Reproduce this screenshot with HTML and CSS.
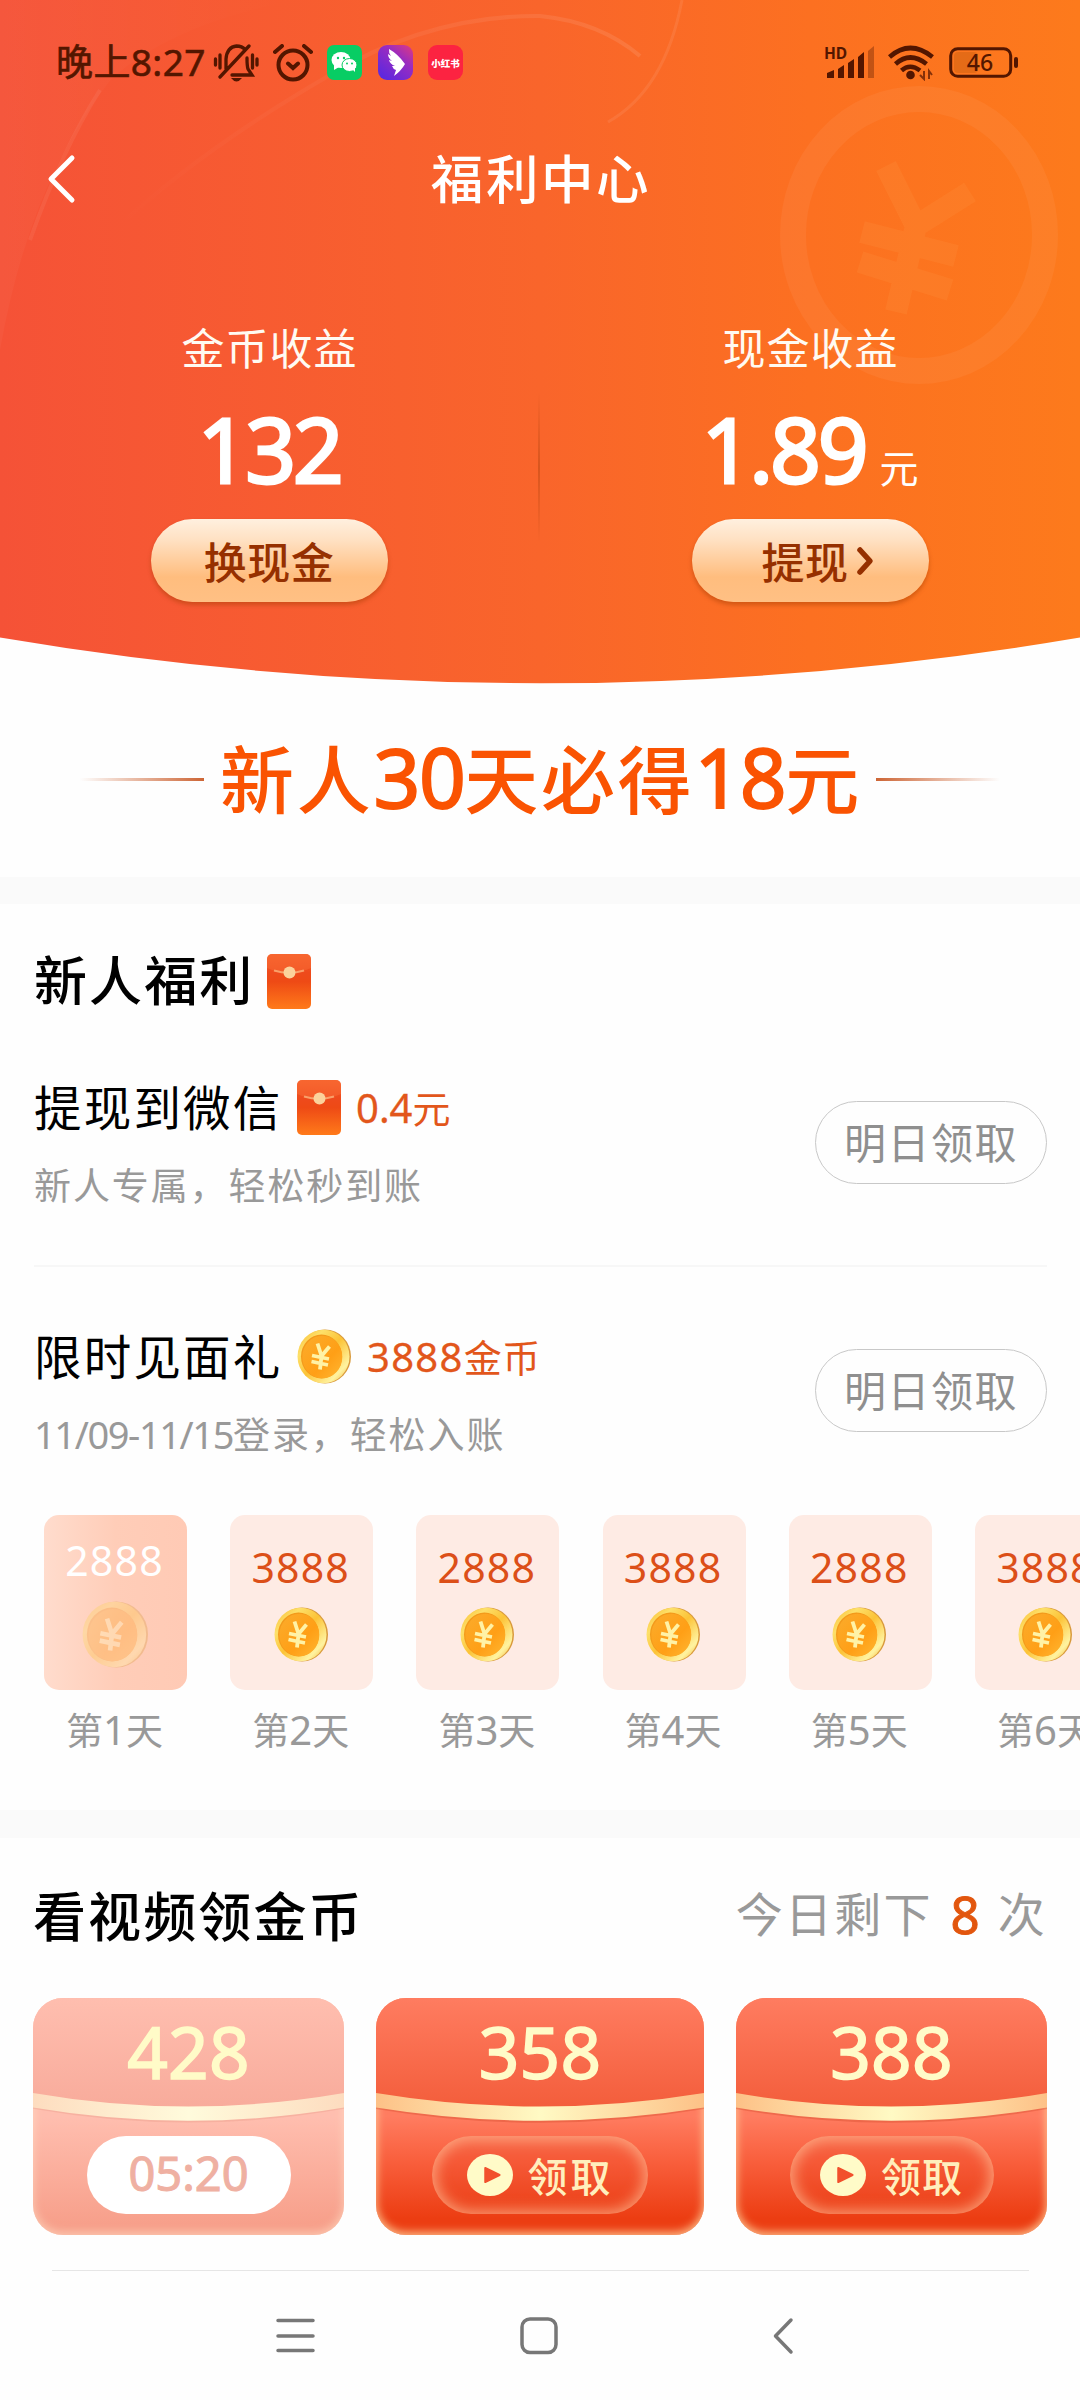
FILE: index.html
```html
<!DOCTYPE html>
<html lang="zh-CN">
<head>
<meta charset="utf-8">
<title>福利中心</title>
<link rel="stylesheet" href="styles.css">
</head>
<body>
<svg class="defs" aria-hidden="true">
  <defs>
    <linearGradient id="coinRim" x1="0" y1="0" x2="1" y2="1">
      <stop offset="0" stop-color="#fbb829"/><stop offset=".25" stop-color="#fde06a"/><stop offset=".5" stop-color="#fcc337"/><stop offset=".8" stop-color="#fff3a0"/><stop offset="1" stop-color="#f4a91f"/>
    </linearGradient>
    <linearGradient id="coinFace" x1="0" y1="0" x2="1" y2="1">
      <stop offset="0" stop-color="#fbac2c"/><stop offset=".6" stop-color="#ff9f16"/><stop offset="1" stop-color="#ffb732"/>
    </linearGradient>
    <linearGradient id="envelopeBody" x1="0" y1="0" x2="0" y2="1">
      <stop offset="0" stop-color="#f7622a"/><stop offset=".33" stop-color="#ee4a1c"/><stop offset=".5" stop-color="#ee4a15"/><stop offset="1" stop-color="#ff7a1a"/>
    </linearGradient>
    <linearGradient id="ribbon" x1="0" y1="0" x2="1" y2="0">
      <stop offset="0" stop-color="#fdc187"/><stop offset=".5" stop-color="#fffac4"/><stop offset="1" stop-color="#fdc187"/>
    </linearGradient>
    <linearGradient id="ribbonPale" x1="0" y1="0" x2="1" y2="0">
      <stop offset="0" stop-color="#fddcbf"/><stop offset=".5" stop-color="#fffbdc"/><stop offset="1" stop-color="#fddcbf"/>
    </linearGradient>
    <linearGradient id="flap" x1="0" y1="0" x2="0" y2="1">
      <stop offset="0" stop-color="#ff7c60"/><stop offset="1" stop-color="#f35d3b"/>
    </linearGradient>
    <linearGradient id="flapPale" x1="0" y1="0" x2="0" y2="1">
      <stop offset="0" stop-color="#ffbeaf"/><stop offset="1" stop-color="#f8ab9b"/>
    </linearGradient>
  </defs>
  <symbol id="coin" viewBox="0 0 54 54">
    <ellipse cx="28" cy="27" rx="26" ry="27" fill="#d99a3c"/>
    <ellipse cx="26.500" cy="27" rx="26" ry="26.700" fill="url(#coinRim)"/>
    <ellipse cx="24.500" cy="27" rx="20.500" ry="22" fill="#f39a1b"/>
    <ellipse cx="25.300" cy="27.500" rx="20" ry="21.300" fill="url(#coinFace)"/>
    <g fill="none" stroke="#fff2a6" stroke-width="3.800"><path d="M20.500 14l4 12.500M32.500 17l-8 9.500l-1.500 13.500M15 26l17 3.500M14.500 32l16.500 3.500"/></g>
  </symbol>
  <symbol id="envelope" viewBox="0 0 44 55">
    <rect width="44" height="55" rx="5" fill="url(#envelopeBody)"/>
    <path d="M0 14Q22 24 44 14V5a5 5 0 0 0-5-5H5a5 5 0 0 0-5 5z" fill="#f86a35" opacity=".55"/>
    <path d="M7 16.500Q22 21 37 16.500" fill="none" stroke="#f9a06a" stroke-width="2"/>
    <circle cx="22.500" cy="18.500" r="6" fill="#fbd29c"/>
  </symbol>
</svg>

<header class="hero">
  <svg class="hero-bg" viewBox="0 0 1080 684" preserveAspectRatio="none">
    <defs>
      <linearGradient id="heroFill"><stop offset="0" stop-color="#f55237"/><stop offset=".5" stop-color="#f9652b"/><stop offset=".75" stop-color="#fc7021"/><stop offset="1" stop-color="#fd7a1c"/></linearGradient>
      <linearGradient id="sheen"><stop offset="0" stop-color="#fff" stop-opacity="0"/><stop offset="1" stop-color="#fff" stop-opacity=".1"/></linearGradient>
      <linearGradient id="fold"><stop offset="0" stop-color="#fff" stop-opacity=".03"/><stop offset="1" stop-color="#fff" stop-opacity="0"/></linearGradient>
    </defs>
    <path d="M0 0H1080V637.500Q540 729 0 637.500z" fill="url(#heroFill)"/>
    <path d="M0 350Q30 180 112 78Q180 20 300 0H0z" fill="url(#fold)"/>
    <path d="M30 240Q62 150 100 90" fill="none" stroke="#fff" stroke-opacity=".06" stroke-width="4"/>
    <path d="M112 232Q200 150 330 75Q430 15 540 16Q600 22 640 56" fill="none" stroke="url(#sheen)" stroke-width="4"/>
    <path d="M682 0Q665 90 608 122" fill="none" stroke="#fff" stroke-opacity=".08" stroke-width="3"/>
    <ellipse cx="919" cy="235" rx="126" ry="136" fill="none" stroke="#fff" stroke-opacity=".05" stroke-width="26"/>
    <path d="M886 166L916 226L970 192M916 226L896 312M862 232L956 256M860 262L950 290" fill="none" stroke="#ff9a46" stroke-opacity=".18" stroke-width="22"/>
  </svg>

  <div class="status">
    <span class="clock">晚上8:27</span>
    <svg class="i-bell" viewBox="0 0 46 40" fill="none" stroke="#531600" stroke-width="3.300" stroke-linecap="round">
      <path d="M13 26V16Q14 4 23.500 3Q29 3 32 6.500M34 15q0 8 1 11l4 6H19M7 34L36 3M7 12v13M2.500 16v6M39.500 12v13M44 16v6"/><path d="M18 35h11q-5.500 7-11 0z" fill="#531600" stroke="none"/>
    </svg>
    <svg class="i-alarm" viewBox="0 0 40 38" fill="none" stroke="#531600" stroke-width="4" stroke-linecap="round">
      <circle cx="20" cy="21" r="14.500"/><path d="M2 8l7-6M38 8l-7-6M15 19.500l5 4.500l5-4.500"/>
    </svg>
    <svg class="i-app wechat" viewBox="0 0 35 35">
      <rect width="35" height="35" rx="7" fill="#08cd64"/><g fill="#fff"><ellipse cx="14" cy="15" rx="9.500" ry="8"/><path d="M7 20l0 5l5-3z"/></g><g fill="#fff" stroke="#08cd64"><ellipse cx="22.500" cy="20" rx="7.500" ry="6.500"/></g><path d="M25 24l3 3l0-5z" fill="#fff"/><g fill="#08cd64"><circle cx="11" cy="13" r="1.200"/><circle cx="17" cy="13" r="1.200"/><circle cx="20" cy="18.500" r="1"/><circle cx="25" cy="18.500" r="1"/></g>
    </svg>
    <svg class="i-app wing" viewBox="0 0 35 35">
      <defs><linearGradient id="wingFill" x1="1" y1="0" x2=".2" y2="1"><stop offset="0" stop-color="#e23a7e"/><stop offset=".4" stop-color="#9a2cc0"/><stop offset="1" stop-color="#5b28e0"/></linearGradient></defs>
      <rect width="35" height="35" rx="9" fill="url(#wingFill)"/><path d="M11 4Q20 9 27 19Q23 26 16 31L18 25Q15 24 14 21L17 21Q12 19 11 15L14 16Q10 13 10 9L13 11Q10.500 8 11 4z" fill="#fff"/>
    </svg>
    <svg class="i-app red" viewBox="0 0 35 35"><rect width="35" height="35" rx="9" fill="#fc2341"/><text x="17.500" y="21.500" text-anchor="middle" class="red-label">小红书</text></svg>
    <span class="spacer"></span>
    <svg class="i-signal" viewBox="0 0 52 34"><text x="0" y="12.500" class="hd-label">HD</text><g fill="#531600"><path d="M3 32v-5l7-3v8zM14 32v-9l6-4v13zM24 32V17l6-4v19zM34 32V11l6-5v26z"/><path d="M44 32V5l6-5v32z" opacity=".35"/></g></svg>
    <svg class="i-wifi" viewBox="0 0 46 36" fill="none" stroke="#531600" stroke-width="4.600"><path d="M1.500 12Q22 -6 44.500 12M7.500 19Q22 6 38.500 19M13.500 25.500Q22 18 32 25.500"/><circle cx="22.500" cy="30" r="4.300" fill="#531600" stroke="none"/><path d="M36 26v8l-4-4M41 34v-8l3 4" stroke-width="2" opacity=".7"/></svg>
    <svg class="i-battery" viewBox="0 0 70 32"><rect x="1.700" y="1.700" width="60" height="27.600" rx="7" fill="none" stroke="#531600" stroke-width="3"/><rect x="5" y="5" width="24" height="21" rx="4" fill="#c8600f" opacity=".45"/><rect x="65" y="10" width="4" height="11" rx="2" fill="#531600"/><text x="31" y="23.500" text-anchor="middle" class="battery-label">46</text></svg>
  </div>

  <div class="titlebar">
    <svg class="i-back" viewBox="0 0 30 50" fill="none" stroke="#fff" stroke-width="5" stroke-linecap="round" stroke-linejoin="round"><path d="M26 4L5 25L26 46"/></svg>
    <h1>福利中心</h1>
  </div>

  <div class="earnings">
    <div class="earning">
      <div class="e-label">金币收益</div>
      <div class="e-value">132</div>
      <button class="e-btn">换现金</button>
    </div>
    <div class="earning">
      <div class="e-label">现金收益</div>
      <div class="e-value">1.89<small>元</small></div>
      <button class="e-btn arrow">提现<svg viewBox="0 0 18 30" fill="none" stroke="#963000" stroke-width="5.500" stroke-linecap="round" stroke-linejoin="round"><path d="M4 4L14 15L4 26"/></svg></button>
    </div>
  </div>
</header>

<section class="banner"><i class="rule left"></i><h2>新人<b>30</b>天必得<b>18</b>元</h2><i class="rule right"></i></section>

<section class="newbie">
  <h3>新人福利<svg class="envelope"><use href="#envelope"/></svg></h3>
  <div class="task first">
    <div>
      <div class="t-title"><span>提现到微信</span><svg class="envelope"><use href="#envelope"/></svg><em><b>0.4</b>元</em></div>
      <div class="t-sub">新人专属，轻松秒到账</div>
    </div>
    <button class="later">明日领取</button>
  </div>
  <div class="task second">
    <div>
      <div class="t-title"><span>限时见面礼</span><svg class="coin"><use href="#coin"/></svg><em class="wide"><b>3888</b>金币</em></div>
      <div class="t-sub"><b>11/09-11/15</b>登录，轻松入账</div>
    </div>
    <button class="later">明日领取</button>
  </div>
  <div class="days">
    <div class="day done"><div class="d-card">2888<svg class="coin"><use href="#coin"/></svg></div><p>第<b>1</b>天</p></div>
    <div class="day"><div class="d-card">3888<svg class="coin"><use href="#coin"/></svg></div><p>第<b>2</b>天</p></div>
    <div class="day"><div class="d-card">2888<svg class="coin"><use href="#coin"/></svg></div><p>第<b>3</b>天</p></div>
    <div class="day"><div class="d-card">3888<svg class="coin"><use href="#coin"/></svg></div><p>第<b>4</b>天</p></div>
    <div class="day"><div class="d-card">2888<svg class="coin"><use href="#coin"/></svg></div><p>第<b>5</b>天</p></div>
    <div class="day"><div class="d-card">3888<svg class="coin"><use href="#coin"/></svg></div><p>第<b>6</b>天</p></div>
  </div>
</section>

<section class="videos">
  <div class="v-head"><h3>看视频领金币</h3><div class="remain">今日剩下<b>8</b>次</div></div>
  <div class="packets">
    <div class="packet claimed">
      <svg class="flap" viewBox="0 0 311 126" preserveAspectRatio="none"><path d="M0 0H311V97Q155 124 0 97z" fill="url(#flapPale)"/><path d="M0 109.500Q155 137 311 109.500" fill="none" stroke="#e08a78" stroke-opacity=".25" stroke-width="2.500"/><path d="M0 95Q155 122 311 95V109.500Q155 136 0 109.500z" fill="url(#ribbonPale)"/></svg>
      <div class="amount">428</div><div class="timer">05:20</div>
    </div>
    <div class="packet">
      <svg class="flap" viewBox="0 0 311 126" preserveAspectRatio="none"><path d="M0 0H311V97Q155 124 0 97z" fill="url(#flap)"/><path d="M0 109.500Q155 137 311 109.500" fill="none" stroke="#c43a18" stroke-opacity=".28" stroke-width="3"/><path d="M0 95Q155 122 311 95V109.500Q155 136 0 109.500z" fill="url(#ribbon)"/></svg>
      <div class="amount">358</div>
      <div class="claim"><svg viewBox="0 0 48 42" preserveAspectRatio="none"><ellipse cx="24" cy="21" rx="24" ry="21" fill="#fffbc8"/><path d="M19 14L34 21L19 28z" fill="#f2502c" stroke="#f2502c" stroke-width="2" stroke-linejoin="round"/></svg>领取</div>
    </div>
    <div class="packet">
      <svg class="flap" viewBox="0 0 311 126" preserveAspectRatio="none"><path d="M0 0H311V97Q155 124 0 97z" fill="url(#flap)"/><path d="M0 109.500Q155 137 311 109.500" fill="none" stroke="#c43a18" stroke-opacity=".28" stroke-width="3"/><path d="M0 95Q155 122 311 95V109.500Q155 136 0 109.500z" fill="url(#ribbon)"/></svg>
      <div class="amount">388</div>
      <div class="claim"><svg viewBox="0 0 48 42" preserveAspectRatio="none"><ellipse cx="24" cy="21" rx="24" ry="21" fill="#fffbc8"/><path d="M19 14L34 21L19 28z" fill="#f2502c" stroke="#f2502c" stroke-width="2" stroke-linejoin="round"/></svg>领取</div>
    </div>
  </div>
  <hr>
</section>

<nav class="sysnav">
  <svg viewBox="0 0 44 44"><path d="M5 6.500H40M5 22H40M5 36.500H40"/></svg>
  <svg viewBox="0 0 44 44"><rect x="5" y="5" width="34" height="33.500" rx="8"/></svg>
  <svg viewBox="0 0 44 44"><path d="M30 6L14.500 22L30 38"/></svg>
</nav>
</body>
</html>
```
FILE: styles.css
```css
* { box-sizing: border-box; margin: 0; padding: 0; }
body {
  width: 1080px; height: 2400px; overflow: hidden; background: #fefefe; color: #000;
  font-family: "Noto Sans", "Noto Sans CJK SC", sans-serif;
  display: flex; flex-direction: column;
}
svg { display: block; flex: none; }
button { font: inherit; border: 0; background: none; }
em, i { font-style: normal; }
.defs { position: absolute; width: 0; height: 0; }

/* hero */
.hero { position: relative; height: 684px; flex: none; color: #fff; }
.hero-bg { position: absolute; inset: 0; width: 1080px; height: 684px; z-index: -1; }
.status { display: flex; align-items: center; height: 125px; padding: 0 61px 0 56px; }
.clock { width: 157px; font-size: 37px; line-height: 46px; padding-bottom: 2px; letter-spacing: .400px; color: #531600; white-space: nowrap; -webkit-text-stroke: .600px #531600; }
.i-bell { width: 46px; height: 40px; margin-right: 14px; }
.i-alarm { width: 40px; height: 38px; margin-right: 14px; }
.i-app { width: 35px; height: 35px; margin-right: 15.500px; }
.red-label { font-size: 9.500px; font-weight: 900; fill: #fff; }
.spacer { flex: 1; }
.i-signal { width: 52px; height: 34px; margin-right: 12px; overflow: visible; }
.hd-label { font-size: 15.500px; font-weight: 700; fill: #531600; }
.i-wifi { width: 46px; height: 36px; margin-right: 15px; }
.i-battery { width: 70px; height: 32px; }
.battery-label { font-size: 23px; font-weight: 500; fill: #531600; }
.titlebar { display: grid; grid-template-columns: 90px 1fr 90px; align-items: center; height: 107px; }
.i-back { width: 30px; height: 50px; margin-left: 46px; }
h1 { font-size: 52.500px; font-weight: 500; letter-spacing: 2.600px; text-align: center; line-height: 80px; padding-left: 2px; }
.earnings { display: grid; grid-template-columns: 540px 540px; padding-top: 87px; }
.earning { display: flex; flex-direction: column; align-items: center; }
.earning:first-child {
  padding-right: 2px;
  background: linear-gradient(rgba(140,50,0,0), rgba(140,50,0,.3), rgba(140,50,0,0)) right 0 top 73px / 2px 151px no-repeat;
}
.e-label { font-size: 43px; line-height: 60px; letter-spacing: 1px; color: #fffaf2; height: 60px; padding-left: 1px; }
.e-value { display: flex; align-items: baseline; height: 90px; font-size: 89px; line-height: 90px; margin-top: 25px; letter-spacing: -3.200px; -webkit-text-stroke: 2.800px #fff; }
.e-value small { font-size: 39px; margin-left: 14px; letter-spacing: 0; -webkit-text-stroke: 0; }
.e-btn {
  display: flex; align-items: center; justify-content: center; width: 237px; height: 83px; margin-top: 25px;
  border-radius: 42px; font-size: 43px; font-weight: 500; letter-spacing: .500px; color: #963000;
  background: linear-gradient(#fff0df 0, #ffe1c3 25%, #ffbd7e 70%, #ffc084 100%);
  box-shadow: 0 3px 4px rgba(160,60,0,.45);
}
.e-btn.arrow { padding-left: 15px; }
.e-btn svg { width: 18px; height: 30px; margin-left: 7px; }

/* headline */
.banner { display: flex; align-items: flex-start; justify-content: center; height: 193px; padding-top: 46px; flex: none; }
.banner h2 { font-size: 74px; font-weight: 500; line-height: 100px; letter-spacing: 2.700px; color: #fa5302; white-space: nowrap; margin: 0 14px 0 16px; }
.banner b { font-size: 82px; font-weight: 400; letter-spacing: -1.500px; line-height: 1; -webkit-text-stroke: 1.800px #fa5302; }
.rule { width: 124px; height: 3px; margin-top: 48px; }
.rule.left { background: linear-gradient(90deg, rgba(208,100,50,0), #cd6535); }
.rule.right { background: linear-gradient(270deg, rgba(208,100,50,0), #cd6535); }

/* newcomer tasks */
.newbie { height: 961px; flex: none; border-top: 27px solid #fafafa; border-bottom: 28px solid #fafafa; padding: 49px 0 0 34px; overflow: hidden; }
h3 { font-size: 53px; font-weight: 500; letter-spacing: 2.100px; line-height: 56px; display: flex; align-items: center; }
.envelope { width: 44px; height: 55px; }
.coin { width: 54px; height: 55px; }
h3 .envelope { margin-left: 13px; }
.task { display: flex; align-items: center; justify-content: space-between; margin-right: 33px; }
.task.first { padding: 70px 0 59px; box-shadow: inset 0 -2px 0 #f7f7f7; }
.task.second { padding: 61px 0 58px; }
.t-title { display: flex; align-items: center; height: 56px; font-size: 47.500px; letter-spacing: 2.200px; }
.t-title span { width: 263px; white-space: nowrap; padding-bottom: 4px; }
.t-title em { font-size: 38px; font-weight: 400; color: #e2561b; letter-spacing: 0; margin-left: 15px; }
.t-title b { font-size: 40px; font-weight: 400; -webkit-text-stroke: .300px #e2561b; }
.t-title em.wide { margin-left: 16px; letter-spacing: .500px; }
.t-title em.wide b { letter-spacing: 1.300px; }
.t-sub { font-size: 37px; line-height: 44px; letter-spacing: 1.900px; color: #999; margin-top: 29px; white-space: nowrap; }
.t-sub b { font-weight: 400; font-size: 38px; line-height: 1; letter-spacing: -1.400px; }
.later { width: 232px; height: 83px; border: 1.500px solid #c8c8c8; border-radius: 42px; font-size: 42px; letter-spacing: 1.500px; color: #8f8f8f; padding-bottom: 4px; margin-bottom: 2px; }
.second .later { margin-bottom: 5px; }
.days { display: flex; gap: 43.200px; padding-left: 10px; }
.day { width: 143px; flex: none; text-align: center; }
.d-card { height: 175px; border-radius: 15px; background: #feebe4; color: #dc4f18; font-size: 41px; letter-spacing: 1.200px; line-height: 50px; padding: 27px 2px 0 0; display: flex; flex-direction: column; align-items: center; }
.d-card .coin { margin-top: 15px; }
.done .d-card { background: linear-gradient(90deg, #ffdccd, #ffcdb8 50%, #ffcab5); color: #fff; padding-top: 20px; }
.done .coin { width: 66px; height: 69px; opacity: .32; }
.day p { font-size: 37px; line-height: 44px; margin: 19px 2px 0 0; color: #999; }
.day b { font-size: 40px; line-height: 1; font-weight: 400; }

/* video packets */
.videos { padding: 49px 33px 0; }
.v-head { display: flex; align-items: center; justify-content: space-between; height: 60px; }
.remain { font-size: 47px; line-height: 60px; letter-spacing: 2.200px; color: #999; margin-top: -6px; }
.remain b { font-size: 51px; line-height: 1; font-weight: 400; color: #e2560e; margin: 0 18px; letter-spacing: 0; vertical-align: -2px; -webkit-text-stroke: 1px #e2560e; }
.packets { display: grid; grid-template-columns: 311px 328px 311px; gap: 32px; margin-top: 51px; }
.packet {
  position: relative; height: 237px; border-radius: 30px; overflow: hidden; display: flex; flex-direction: column; align-items: center;
  background: linear-gradient(#ff7c60 50%, #f9603e 68%, #ec3d12 93%); box-shadow: inset 0 -2px 8px 1px rgba(255,215,160,.8);
}
.packet.claimed { background: linear-gradient(#ffbeaf 50%, #f79f8a 96%); box-shadow: inset 0 -2px 8px 1px rgba(255,225,200,.6); }
.flap { position: absolute; top: 0; left: 0; width: 100%; height: 126px; }
.amount { position: relative; font-size: 71px; letter-spacing: .300px; line-height: 80px; margin-top: 14px; color: #fffbc8; -webkit-text-stroke: 1.600px #fffbc8; }
.timer, .claim { position: relative; height: 78px; width: 204px; margin-top: 44px; border-radius: 39px; display: flex; align-items: center; justify-content: center; }
.timer { background: #fff; color: #efb0a2; font-size: 47px; padding-bottom: 4px; -webkit-text-stroke: 1px #efb0a2; }
.claim { font-size: 40px; font-weight: 500; color: #ffefbd; letter-spacing: 1px; box-shadow: inset 0 0 14px 4px rgba(255,190,150,.7); background: rgba(230,60,30,.15); }
.packet:nth-child(2) .claim { width: 216px; letter-spacing: 3px; }
.claim svg { width: 46px; height: 42px; margin-right: 15px; }
hr { border: 0; height: 1px; background: #e6e6e6; margin: 35px 18px 0 19px; }

.sysnav { flex: 1; display: flex; align-items: center; justify-content: center; gap: 200px; padding-right: 2px; }
.sysnav svg { width: 44px; height: 44px; fill: none; stroke: #777; stroke-width: 3.500px; stroke-linecap: round; stroke-linejoin: round; }
```
